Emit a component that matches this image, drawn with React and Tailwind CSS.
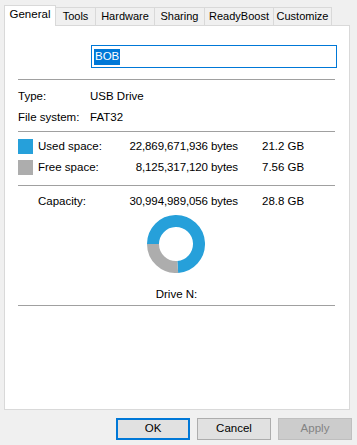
import React from "react";

function Tab({ label, w, selected }) {
  if (selected) {
    return (
      <div
        className={`relative z-10 h-[21px] ${w} flex items-center justify-center bg-white border border-b-0 border-[#d9d9d9] pb-[2px] text-[11.5px]`}
      >
        {label}
      </div>
    );
  }
  return (
    <div
      className={`h-[18px] mb-[1px] -ml-px ${w} flex items-center justify-center bg-[#f0f0f0] border border-b-0 border-[#d9d9d9] text-[11px]`}
    >
      {label}
    </div>
  );
}

function Sep({ mt }) {
  return <div className={`${mt} w-[317px] h-px bg-[#a0a0a0]`} />;
}

function SpaceRow({ mt, color, label, bytes, gb }) {
  return (
    <div className={`${mt} flex items-center h-[15px]`}>
      {color ? (
        <div className={`w-[15px] h-[15px] ${color}`} />
      ) : (
        <div className="w-[15px] h-[15px]" />
      )}
      <div className="ml-[5px] w-[80px] whitespace-nowrap">{label}</div>
      <div className="w-[120px] text-right whitespace-nowrap tracking-[-0.1px]">{bytes}</div>
      <div className="ml-[24px] whitespace-nowrap">{gb}</div>
    </div>
  );
}

function Donut() {
  return (
    <svg width="58" height="58" viewBox="0 0 58 58">
      <path
        d="M 6 29 A 23 23 0 1 1 30.72 51.94"
        fill="none"
        stroke="#26a0da"
        strokeWidth="12"
      />
      <path
        d="M 30.72 51.94 A 23 23 0 0 1 6 29"
        fill="none"
        stroke="#adadad"
        strokeWidth="12"
      />
    </svg>
  );
}

export default function App() {
  return (
    <div
      className="w-[357px] h-[445px] bg-[#f0f0f0] pt-[5px] pl-[4px] text-[11.5px] text-black leading-none"
      style={{ fontFamily: '"Liberation Sans", Arial, sans-serif' }}
    >
      <div className="flex items-end h-[21px]">
        <Tab label="General" w="w-[52px]" selected />
        <Tab label="Tools" w="w-[41px]" />
        <Tab label="Hardware" w="w-[60px]" />
        <Tab label="Sharing" w="w-[51px]" />
        <Tab label="ReadyBoost" w="w-[70px]" />
        <Tab label="Customize" w="w-[59px]" />
      </div>
      <div className="-mt-px w-[346px] h-[385px] bg-white border border-[#d9d9d9] pl-[13px]">
        <div className="mt-[19px] ml-[73px] w-[246px] h-[23px] border border-[#0078d7] flex items-center pl-[2px]">
          <span className="bg-[#0078d7] text-white h-[16px] flex items-center px-px">BOB</span>
        </div>
        <Sep mt="mt-[11px]" />
        <div className="mt-[6px] h-[21px] flex items-center">
          <div className="w-[72px]">Type:</div>
          <div>USB Drive</div>
        </div>
        <div className="h-[21px] flex items-center">
          <div className="w-[72px]">File system:</div>
          <div>FAT32</div>
        </div>
        <Sep mt="mt-[3px]" />
        <SpaceRow
          mt="mt-[7px]"
          color="bg-[#26a0da]"
          label="Used space:"
          bytes="22,869,671,936 bytes"
          gb="21.2 GB"
        />
        <SpaceRow
          mt="mt-[6px]"
          color="bg-[#adadad]"
          label="Free space:"
          bytes="8,125,317,120 bytes"
          gb="7.56 GB"
        />
        <Sep mt="mt-[10px]" />
        <SpaceRow
          mt="mt-[8px]"
          label="Capacity:"
          bytes="30,994,989,056 bytes"
          gb="28.8 GB"
        />
        <div className="mt-[6px] w-[317px] flex justify-center">
          <div className="ml-[-1px]">
            <Donut />
          </div>
        </div>
        <div className="mt-[13px] w-[317px] h-[17px] flex items-center justify-center">
          Drive N:
        </div>
        <Sep mt="mt-[2px]" />
      </div>
      <div className="mt-[8px] flex justify-end gap-[7px] pr-[5px]">
        <button className="w-[74px] h-[22px] bg-[#e1e1e1] border-2 border-[#0078d7] flex items-center justify-center">
          OK
        </button>
        <button className="w-[74px] h-[22px] bg-[#e1e1e1] border border-[#adadad] flex items-center justify-center">
          Cancel
        </button>
        <button className="w-[74px] h-[22px] bg-[#cccccc] border border-[#bfbfbf] text-[#838383] flex items-center justify-center">
          Apply
        </button>
      </div>
    </div>
  );
}
